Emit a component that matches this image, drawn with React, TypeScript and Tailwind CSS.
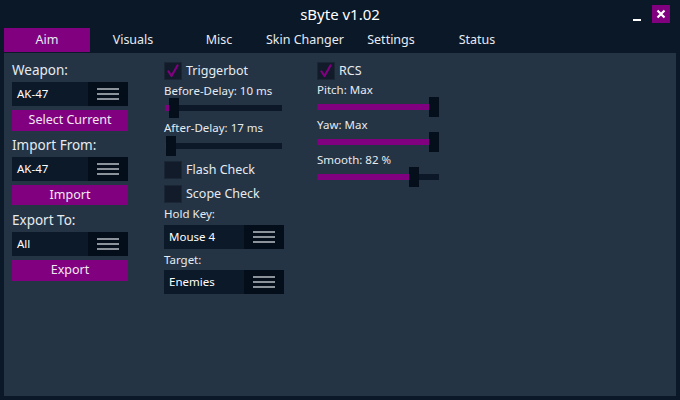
import React from "react";

const FONT = { fontFamily: '"Noto Sans", "Open Sans", sans-serif' };
const TABS = ["Aim", "Visuals", "Misc", "Skin Changer", "Settings", "Status"];

function Burger() {
  return (
    <div className="w-[40px] h-full bg-[#040e1b] flex flex-col items-center justify-center gap-[3px]">
      <span className="block w-[22px] h-[2px] bg-[#8b929a]" />
      <span className="block w-[22px] h-[2px] bg-[#8b929a]" />
      <span className="block w-[22px] h-[2px] bg-[#8b929a]" />
    </div>
  );
}

function Dropdown({ value, className }: { value: string; className?: string }) {
  return (
    <div className={"h-[24px] flex bg-[#0c1929] " + (className ?? "")}>
      <div className="flex-1 pl-[5px] flex items-center text-[11.5px] text-white">{value}</div>
      <Burger />
    </div>
  );
}

function Btn({ label, className }: { label: string; className?: string }) {
  return (
    <div className={"bg-[#800080] flex items-center justify-center text-[12.5px] text-[#f2e8f2] " + (className ?? "")}>
      {label}
    </div>
  );
}

function Check({ label, on, className }: { label: string; on?: boolean; className?: string }) {
  return (
    <div className={"h-[18px] flex items-center gap-[4px] " + (className ?? "")}>
      <div className="w-[18px] h-[18px] bg-[#111b29] border border-[#1b2635] flex items-center justify-center">
        {on && (
          <svg width="14" height="14" viewBox="0 0 14 14">
            <path d="M2.5 7.5 L5.5 12 L11.5 1.5" fill="none" stroke="#800080" strokeWidth="2.2" strokeLinecap="round" strokeLinejoin="round" />
          </svg>
        )}
      </div>
      <span className="text-[12.5px] text-[#e6ebf0]">{label}</span>
    </div>
  );
}

function Slider({ width, thumb, fill, className }: { width: number; thumb: number; fill?: boolean; className?: string }) {
  return (
    <div className={"relative h-[20px] " + (className ?? "")} style={{ width }}>
      <div className="absolute left-0 right-0 top-[7px] h-[6px] bg-[#0c1828]" />
      <div className="absolute left-0 top-[7px] h-[6px] bg-[#800080]" style={{ width: fill ? thumb + 5 : thumb }} />
      <div className="absolute top-0 w-[10px] h-[20px] bg-[#050f1c]" style={{ left: thumb }} />
    </div>
  );
}

function Label({ text, className }: { text: string; className?: string }) {
  return <div className={"h-[15px] leading-[15px] text-[11.5px] text-[#e6ebf0] " + (className ?? "")}>{text}</div>;
}

export default function App() {
  return (
    <div className="w-[680px] h-[400px] bg-[#0b1828] flex flex-col px-[4px] pb-[4px] text-white" style={FONT}>
      {/* title bar */}
      <div className="h-[28px] grid grid-cols-[1fr_auto_1fr] items-center">
        <div />
        <div className="text-[15px] text-white pt-[1px]">sByte v1.02</div>
        <div className="flex items-center justify-end pr-[6px] gap-[11px]">
          <span className="block w-[8px] h-[2px] bg-white mt-[12px]" />
          <div className="w-[18px] h-[18px] bg-[#800080] flex items-center justify-center">
            <svg width="10" height="10" viewBox="0 0 10 10">
              <path d="M1.5 1.5 L8.5 8.5 M8.5 1.5 L1.5 8.5" stroke="white" strokeWidth="2.2" />
            </svg>
          </div>
        </div>
      </div>

      {/* tabs */}
      <div className="h-[24px] flex">
        {TABS.map((t, i) => (
          <div key={t} className={"w-[86px] flex items-center justify-center text-[12.5px] text-[#e6ebf0] " + (i === 0 ? "bg-[#800080]" : "")}>
            {t}
          </div>
        ))}
      </div>

      {/* panel */}
      <div className="mt-[1px] flex-1 bg-[#243445] flex pl-[8px]">
        {/* left */}
        <div className="w-[116px] flex flex-col">
          <div className="mt-[8px] h-[18px] leading-[18px] text-[13.5px] text-[#e6ebf0]">Weapon:</div>
          <Dropdown value="AK-47" className="mt-[3px]" />
          <Btn label="Select Current" className="mt-[4px] h-[21px]" />
          <div className="mt-[5px] h-[18px] leading-[18px] text-[13.5px] text-[#e6ebf0]">Import From:</div>
          <Dropdown value="AK-47" className="mt-[3px]" />
          <Btn label="Import" className="mt-[4px] h-[20px]" />
          <div className="mt-[6px] h-[18px] leading-[18px] text-[13.5px] text-[#e6ebf0]">Export To:</div>
          <Dropdown value="All" className="mt-[3px]" />
          <Btn label="Export" className="mt-[4px] h-[21px]" />
        </div>

        {/* middle */}
        <div className="ml-[36px] w-[120px] flex flex-col">
          <Check label="Triggerbot" on className="mt-[9px]" />
          <Label text="Before-Delay: 10 ms" className="mt-[3px]" />
          <Slider width={117} thumb={4} className="ml-[1px]" />
          <Label text="After-Delay: 17 ms" className="mt-[2px]" />
          <Slider width={117} thumb={1} className="ml-[1px] mt-[1px]" />
          <Check label="Flash Check" className="mt-[5px]" />
          <Check label="Scope Check" className="mt-[6px]" />
          <Label text="Hold Key:" className="mt-[3px]" />
          <Dropdown value="Mouse 4" className="mt-[4px]" />
          <Label text="Target:" className="mt-[3px]" />
          <Dropdown value="Enemies" className="mt-[3px]" />
        </div>

        {/* right */}
        <div className="ml-[33px] w-[122px] flex flex-col">
          <Check label="RCS" on className="mt-[9px]" />
          <div className="mt-[3px] h-[14px] leading-[14px] text-[11.5px] text-[#e6ebf0]">Pitch: Max</div>
          <Slider width={122} thumb={112} fill />
          <div className="mt-[1px] h-[14px] leading-[14px] text-[11.5px] text-[#e6ebf0]">Yaw: Max</div>
          <Slider width={122} thumb={112} fill />
          <div className="mt-[1px] h-[14px] leading-[14px] text-[11.5px] text-[#e6ebf0]">Smooth: 82 %</div>
          <Slider width={122} thumb={92} />
        </div>
      </div>
    </div>
  );
}
